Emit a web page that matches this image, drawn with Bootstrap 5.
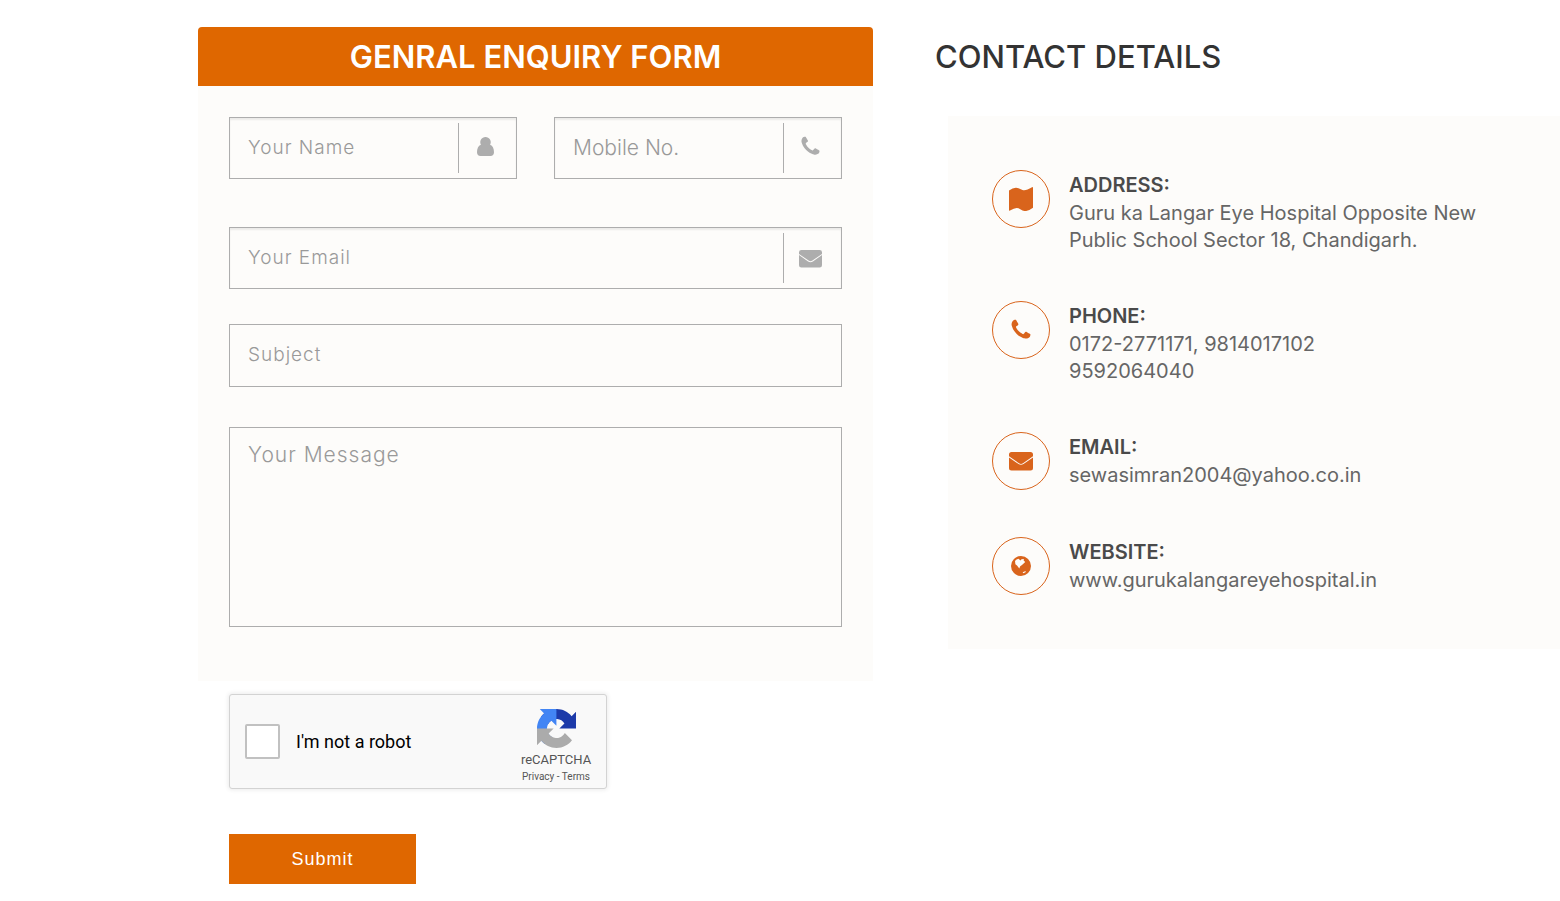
<!DOCTYPE html>
<html lang="en">
<head>
<meta charset="utf-8">
<meta name="viewport" content="width=device-width, initial-scale=1">
<title>General enquiry</title>
<link href="https://cdn.jsdelivr.net/npm/bootstrap@5.3.0/dist/css/bootstrap.min.css" rel="stylesheet">
<style>
  :root { --brand: #df6700; --icon: #d9641c; --panel: #fdfcfa; --line: #adadad; --hint: #999; }
  body { font-family: Inter, "Open Sans", sans-serif; color: #666; background: #fff; }

  .enquiry-layout { display: grid; grid-template-columns: 198fr 675fr 62fr 625fr; padding-top: 27px; padding-bottom: 16px; }
  .enquiry-form { grid-column: 2; min-width: 0; }
  .contact-side { grid-column: 4; min-width: 0; }

  .form-title { background: var(--brand); color: #fff; font-size: 31px; line-height: 59px; font-weight: 600; border-radius: 4px 4px 0 0; }
  .form-panel { background: var(--panel); padding: 31px 31px 54px; }
  .name-row { display: grid; grid-template-columns: repeat(2, minmax(0, 1fr)); gap: 37px; margin-bottom: 48px; }

  .field { border: 1px solid var(--line); height: 62px; }
  .field.inset { box-shadow: inset 0 2px 2px rgba(0, 0, 0, .07); }
  .field.subject { height: 63px; margin: 35px 0 40px; }
  .field:focus-within, .message:focus { border-color: var(--brand); }
  .field input { flex: 1 1 0; min-width: 0; border: 0; outline: 0; background: transparent; padding: 0 18px; font-size: 19px; letter-spacing: 1px; }
  .field input.plain { font-size: 21px; letter-spacing: normal; }
  .field input::placeholder, .message::placeholder { color: var(--hint); font-weight: 300; opacity: 1; }
  .field-icon { flex: none; width: 53px; height: 50px; margin-right: 5px; border-left: 1px solid var(--line); color: var(--line); }
  .name-row .field-icon { padding-bottom: 4px; }
  .message { display: block; width: 100%; height: 200px; border: 1px solid var(--line); outline: 0; background: transparent; resize: none; padding: 12px 18px; font-size: 21px; line-height: 30px; letter-spacing: 1px; }

  .form-footer { padding: 13px 31px 0; }
  .captcha { width: 378px; max-width: 100%; height: 95px; background: #f9f9f9; border: 1px solid #d3d3d3; border-radius: 3px; box-shadow: 0 0 4px 1px rgba(0, 0, 0, .08); font-family: Roboto, sans-serif; padding: 0 14px 0 15px; }
  .captcha-box { appearance: none; width: 35px; height: 35px; margin: 0; border: 2px solid #c1c1c1; border-radius: 2px; background: #fff; }
  .captcha-box:checked { background: #4a90e2; }
  .captcha-label { color: #000; font-size: 18px; line-height: 24px; }
  .captcha-brand { width: 72px; color: #555; font-size: 13px; line-height: 16px; padding-top: 14px; }
  .captcha-links { font-size: 10px; line-height: 18px; white-space: nowrap; }
  .captcha-links a { color: #555; text-decoration: none; }
  .submit-btn { width: 187px; height: 50px; margin-top: 45px; background: var(--brand); color: #fff; border: 0; border-radius: 0; font-family: "Liberation Sans", Arial, sans-serif; font-size: 18px; letter-spacing: 1px; }
  .submit-btn:hover { background: #c45a00; color: #fff; }

  .contact-title { color: #333; font-size: 31px; line-height: 59px; font-weight: 500; }
  .contact-panel { background: var(--panel); margin: 30px 0 0 13px; padding: 54px 44px 54px; display: grid; gap: 47px; }
  .contact-item { gap: 19px; }
  .contact-icon { flex: none; width: 58px; height: 58px; border: 1px solid var(--icon); color: var(--icon); }
  .contact-item h3 { font-size: 20px; line-height: 30px; font-weight: 600; color: #4a4a4a; }
  .contact-item p { font-size: 20px; line-height: 27px; }

  @media (max-width: 991px) {
    .enquiry-layout { grid-template-columns: 1fr; padding: 16px; gap: 32px; }
    .enquiry-form, .contact-side { grid-column: 1; }
    .contact-panel { margin-left: 0; padding: 32px 16px; }
  }
</style>
</head>
<body>
<svg class="d-none" aria-hidden="true">
  <symbol id="i-user" viewBox="0 0 17 19"><path d="M8.500 0a5.200 5.200 0 0 1 4.600 7.700C15.800 8.500 17 11.500 17 15.200C17 17.500 15.700 19 13.500 19H3.500C1.300 19 0 17.500 0 15.200C0 11.500 1.200 8.500 3.900 7.700A5.200 5.200 0 0 1 8.500 0z"/></symbol>
  <symbol id="i-phone" viewBox="0 0 1792 1792"><path d="M1600 1240q0 27-10 70.500t-21 68.500q-21 50-122 106-94 51-186 51-27 0-53-3.500t-57.500-12.500-47-14.500-55.500-20.500-49-18q-98-35-175-83-127-79-264-216t-216-264q-48-77-83-175-3-9-18-49t-20.500-55.500-14.500-47-12.500-57.500-3.500-53q0-92 51-186 56-101 106-122 25-11 68.500-21t70.500-10q14 0 21 3 18 6 53 76 11 19 30 54t35 63.500 31 53.500q3 4 17.500 25t21.500 35.500 7 28.500q0 20-28.500 50t-62 55-62 53-28.500 46q0 9 5 22.500t8.500 20.500 14 24 11.500 19q76 137 174 235t235 174q2 1 19 11.500t24 14 20.500 8.500 22.500 5q18 0 46-28.500t53-62 55-62 50-28.500q14 0 28.500 7t35.500 21.500 25 17.500q25 15 53.500 31t63.500 35 54 30q70 35 76 53 3 7 3 21z"/></symbol>
  <symbol id="i-mail" viewBox="0 0 24 24"><path d="M2.500 3h19Q24 3 24 5.500V7.300L14 14.200Q12 15.600 10 14.200L0 7.300V5.500Q0 3 2.500 3zM0 8.400L9.500 15Q12 16.600 14.500 15L24 8.400V19Q24 21.500 21.500 21.500H2.500Q0 21.500 0 19z"/></symbol>
  <symbol id="i-map" viewBox="0 0 24 24"><path d="M0 3.600Q5.500-.6 9.500 1.300L13.500 2.900Q16.500 4.200 23 .2Q24-.4 24 1V20.800Q18 25.400 13.500 23.500L9.500 21.300Q6.500 20 1 23.600Q0 24.200 0 23z"/></symbol>
  <symbol id="i-globe" viewBox="0 0 20 20"><path fill-rule="evenodd" d="M10 0a10 10 0 1 1 0 20a10 10 0 0 1 0-20zM4 5L4.400 8.200L6 9.500L8.300 12.400L9.200 10.200L11 8.900L14.200 6L12.600 4.600L12.900 3L10.500 3.300L9.400 4.500L7.500 2.700L5.500 3.400zM11.700 16.200L14.700 14.900L14.500 16.300L12.300 17.200z"/></symbol>
</svg>

<main class="enquiry-layout">
  <form class="enquiry-form">
    <h1 class="form-title text-center m-0">GENRAL ENQUIRY FORM</h1>
    <div class="form-panel">
      <div class="name-row">
        <div class="field inset d-flex align-items-center">
          <input type="text" aria-label="Your Name" placeholder="Your Name">
          <span class="field-icon d-flex align-items-center justify-content-center"><svg width="17" height="19" fill="currentColor"><use href="#i-user"/></svg></span>
        </div>
        <div class="field inset d-flex align-items-center">
          <input class="plain" type="tel" aria-label="Mobile No." placeholder="Mobile No.">
          <span class="field-icon d-flex align-items-center justify-content-center"><svg width="23" height="23" fill="currentColor"><use href="#i-phone"/></svg></span>
        </div>
      </div>
      <div class="field inset d-flex align-items-center">
        <input type="email" aria-label="Your Email" placeholder="Your Email">
        <span class="field-icon d-flex align-items-center justify-content-center"><svg width="23" height="23" fill="currentColor"><use href="#i-mail"/></svg></span>
      </div>
      <div class="field subject d-flex align-items-center">
        <input type="text" aria-label="Subject" placeholder="Subject">
      </div>
      <textarea class="message" aria-label="Your Message" placeholder="Your Message"></textarea>
    </div>
    <div class="form-footer">
      <div class="captcha d-flex justify-content-between">
        <div class="d-flex align-items-center">
          <input class="captcha-box" type="checkbox" id="robot">
          <label class="captcha-label ps-3" for="robot">I'm not a robot</label>
        </div>
        <div class="captcha-brand d-flex flex-column align-items-center">
          <svg width="39" height="39" viewBox="0 0 64 64" aria-hidden="true">
            <path fill="#1c3aa9" d="M64 31.955l-.033-1.370V4.687l-7.160 7.160C50.948 4.674 42.033.093 32.050.093c-10.400 0-19.622 4.960-25.458 12.640l11.736 11.860a15.550 15.550 0 0 1 4.754-5.334c2.050-1.600 4.952-2.906 8.968-2.906.485 0 .860.057 1.135.163 4.976.393 9.288 3.140 11.828 7.124l-8.307 8.307L64 31.953"/>
            <path fill="#4285f4" d="M31.862.094l-1.370.033H4.594l7.160 7.160C4.580 13.147 0 22.060 0 32.046c0 10.400 4.960 19.622 12.640 25.458L24.500 45.768a15.550 15.550 0 0 1-5.334-4.754c-1.600-2.050-2.906-4.952-2.906-8.968 0-.485.057-.860.163-1.135.393-4.976 3.140-9.288 7.124-11.828l8.307 8.307L31.860.095"/>
            <path fill="#ababab" d="M.001 32.045l.033 1.370v25.898l7.160-7.160c5.860 7.173 14.774 11.754 24.760 11.754 10.400 0 19.622-4.960 25.458-12.640l-11.736-11.860a15.550 15.550 0 0 1-4.754 5.334c-2.050 1.600-4.952 2.906-8.968 2.906-.485 0-.860-.057-1.135-.163-4.976-.393-9.288-3.140-11.828-7.124l8.307-8.307c-10.522.040-22.400.066-27.295-.005"/>
          </svg>
          <span class="mt-1">reCAPTCHA</span>
          <span class="captcha-links"><a href="#">Privacy</a> - <a href="#">Terms</a></span>
        </div>
      </div>
      <button class="submit-btn btn" type="submit">Submit</button>
    </div>
  </form>

  <section class="contact-side">
    <h2 class="contact-title m-0">CONTACT DETAILS</h2>
    <div class="contact-panel">
      <div class="contact-item d-flex">
        <span class="contact-icon rounded-circle d-flex align-items-center justify-content-center"><svg width="24" height="24" fill="currentColor"><use href="#i-map"/></svg></span>
        <div><h3 class="m-0">ADDRESS:</h3><p class="m-0">Guru ka Langar Eye Hospital Opposite New<br>Public School Sector 18, Chandigarh.</p></div>
      </div>
      <div class="contact-item d-flex">
        <span class="contact-icon rounded-circle d-flex align-items-center justify-content-center"><svg width="24" height="24" fill="currentColor"><use href="#i-phone"/></svg></span>
        <div><h3 class="m-0">PHONE:</h3><p class="m-0">0172-2771171, 9814017102<br>9592064040</p></div>
      </div>
      <div class="contact-item d-flex">
        <span class="contact-icon rounded-circle d-flex align-items-center justify-content-center"><svg width="24" height="24" fill="currentColor"><use href="#i-mail"/></svg></span>
        <div><h3 class="m-0">EMAIL:</h3><p class="m-0">sewasimran2004@yahoo.co.in</p></div>
      </div>
      <div class="contact-item d-flex">
        <span class="contact-icon rounded-circle d-flex align-items-center justify-content-center"><svg width="20" height="20" fill="currentColor"><use href="#i-globe"/></svg></span>
        <div><h3 class="m-0">WEBSITE:</h3><p class="m-0">www.gurukalangareyehospital.in</p></div>
      </div>
    </div>
  </section>
</main>
<script src="https://cdn.jsdelivr.net/npm/bootstrap@5.3.0/dist/js/bootstrap.bundle.min.js"></script>
</body>
</html>
